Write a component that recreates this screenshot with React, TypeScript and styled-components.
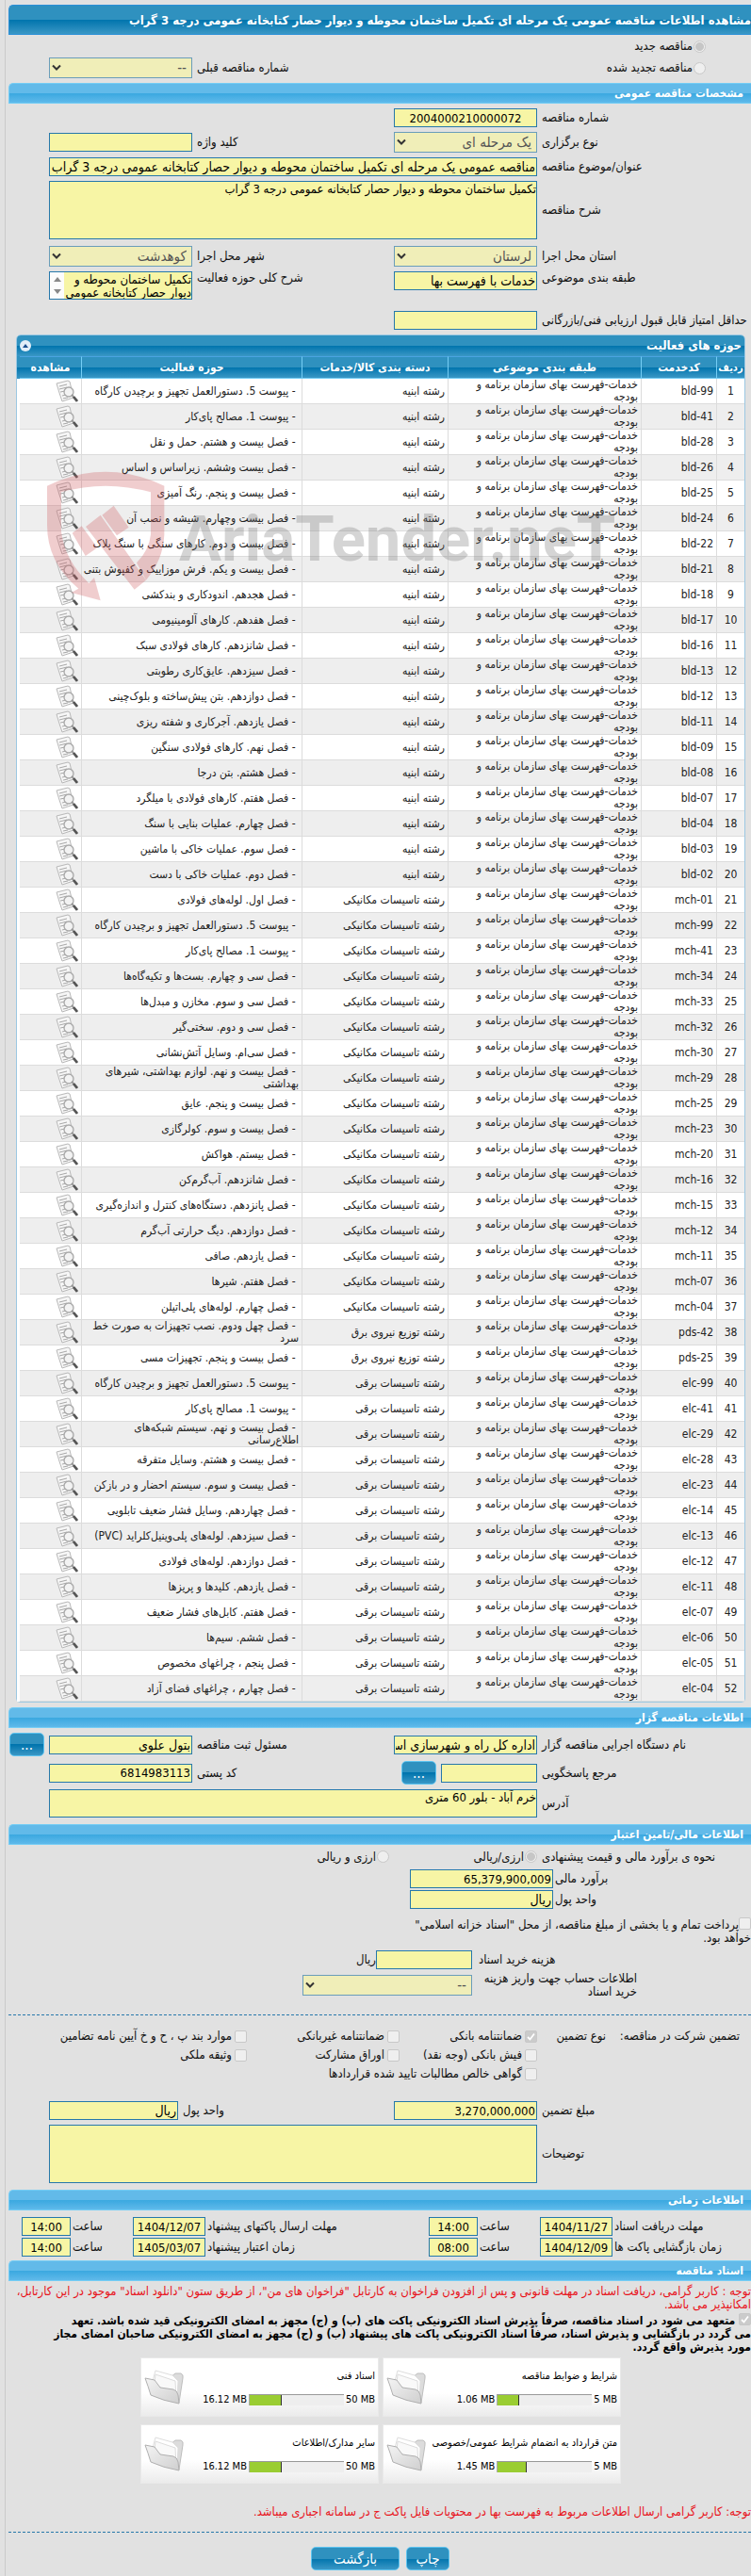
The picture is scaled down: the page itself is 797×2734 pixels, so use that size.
import React, { useId } from 'react';
import styled, { createGlobalStyle, css } from 'styled-components';

const fonts = `Tahoma, "DejaVu Sans Condensed", "DejaVu Sans", sans-serif`;

const GlobalStyle = createGlobalStyle`
  * { box-sizing: border-box; }
  body { margin: 0; background: #e1e1e1; }
  body, input, textarea, select, button { font-family: ${fonts}; }
`;

const Page = styled.main`
  direction: rtl;
  position: relative;
  margin-left: 5px;
  padding: 5px 0 6px 3px;
  border-left: 1px solid #cacaca;
  color: #111;
  font-size: 13px;
  line-height: 14px;
`;

const darkBar = 'linear-gradient(#2f91bf 0, #2f91bf 50%, #0074ad 50%, #3a97c5 100%)';
const lightBar = 'linear-gradient(#62bae9 0, #62bae9 50%, #3aa8e0 50%, #5fb9ea 100%)';

const PageTitle = styled.h1`
  margin: 0;
  height: 32px;
  line-height: 32px;
  border: 1px solid #2a8fd8;
  border-right: 0;
  border-radius: 5px 0 0 0;
  background: ${darkBar};
  color: #fff;
  font-size: 13px;
  font-weight: bold;
  white-space: nowrap;
  overflow: hidden;
`;

const SectionTitle = styled.h2<{ $top?: number }>`
  margin: ${p => p.$top ?? 7}px 0 0;
  padding-right: 8px;
  height: 22px;
  line-height: 20px;
  border: 1px solid #74cdf5;
  border-right: 0;
  border-radius: 5px 0 0 0;
  background: ${lightBar};
  color: #fff;
  font-size: 12px;
  font-weight: bold;
`;

const Row = styled.div<{ $top?: number; $h?: number; $align?: string; $left?: number; $last?: string }>`
  display: grid;
  grid-template-columns: 222px 152px 1fr ${p => p.$last ?? '152px'};
  column-gap: 5px;
  align-items: ${p => p.$align ?? 'center'};
  margin-top: ${p => p.$top ?? 5}px;
  padding-left: ${p => p.$left ?? 43}px;
  min-height: ${p => p.$h ?? 20}px;
`;

const Label = styled.label`
  text-align: left;
`;

const fieldLook = css`
  border: 1px solid #2678ab;
  border-radius: 0;
  background: #f7f5a5;
  color: #000;
  outline: 0;
`;

const Input = styled.input<{ $w?: number; $span?: number }>`
  ${fieldLook}
  width: ${p => (p.$w ? `${p.$w}px` : '100%')};
  height: 20px;
  padding: 0 1px;
  font-size: 14px;
  text-align: right;
  ${p => p.$span && css`grid-column: span ${p.$span};`}
`;

const NumberInput = styled(Input)<{ $center?: boolean }>`
  direction: ltr;
  font-size: 13px;
  text-align: ${p => (p.$center ? 'center' : 'right')};
`;

const TextArea = styled.textarea<{ $h: number; $inset?: number }>`
  ${fieldLook}
  display: block;
  width: 100%;
  height: ${p => p.$h}px;
  padding: 1px 0 0 ${p => p.$inset ?? 0}px;
  font-size: 13px;
  line-height: 14px;
  resize: none;
  overflow: hidden;
`;

const Wide = styled.div`
  grid-column: span 3;
`;

const SelectBox = styled.span<{ $w?: number }>`
  position: relative;
  display: block;
  width: ${p => p.$w ?? 152}px;
  height: 22px;
  svg { position: absolute; left: 3px; top: 7px; pointer-events: none; }
`;

const SelectInput = styled.select`
  ${fieldLook}
  appearance: none;
  width: 100%;
  height: 22px;
  padding: 0 5px;
  border-color: #6a9dba;
  background: #f0eeb8;
  color: #555;
  font-size: 15px;
  opacity: 1;
`;

function Select({ id, value, width }: { id: string; value: string; width?: number }) {
  return (
    <SelectBox $w={width}>
      <SelectInput id={id} disabled defaultValue={value}>
        <option>{value}</option>
      </SelectInput>
      <svg width="10" height="8" viewBox="0 0 10 8">
        <path d="M1 1.5 5 5.5 9 1.5" fill="none" stroke="#333" strokeWidth="2" />
      </svg>
    </SelectBox>
  );
}

const ScrollField = styled.div`
  position: relative;
`;

const ScrollStrip = styled.span`
  position: absolute;
  inset: 1px auto 1px 1px;
  width: 15px;
  background: #fcfcfc;
  display: flex;
  flex-direction: column;
  align-items: center;
  justify-content: space-between;
  padding: 5px 0;
`;

const tick = css`
  appearance: none;
  flex: none;
  margin: 0;
  width: 13px;
  height: 13px;
  border: 1px solid #c8c8c8;
  background: #efefef;
`;

const Radio = styled.input.attrs({ type: 'radio' })`
  ${tick}
  border-radius: 50%;
  &:checked { background: radial-gradient(#c6c6c6 0 4px, #efefef 5px); }
`;

const CheckBox = styled.input.attrs({ type: 'checkbox' })`
  ${tick}
  border-radius: 2px;
  vertical-align: -1px;
  &:checked {
    background: #cbcbcb url("data:image/svg+xml,%3Csvg xmlns='http://www.w3.org/2000/svg' viewBox='0 0 11 11'%3E%3Cpath d='M2 6l2.5 2.5L9 2.5' fill='none' stroke='%23fff' stroke-width='1.8'/%3E%3C/svg%3E") center / 11px no-repeat;
  }
`;

const Choice = styled.label<{ $col?: number; $gap?: number }>`
  display: flex;
  align-items: center;
  gap: ${p => p.$gap ?? 1}px;
  white-space: nowrap;
  ${p => p.$col && css`grid-column: ${p.$col};`}
`;

const TypeRow = styled.div<{ $h: number }>`
  display: flex;
  align-items: center;
  justify-content: space-between;
  height: ${p => p.$h}px;
  padding: 0 48px 0 43px;
`;

const Pair = styled.div<{ $gap?: number }>`
  display: flex;
  align-items: center;
  gap: ${p => p.$gap ?? 5}px;
`;

const Button = styled.button<{ $w: number }>`
  width: ${p => p.$w}px;
  height: 25px;
  padding: 0;
  border: 1px solid #5cc3f0;
  border-radius: 5px;
  background: ${darkBar};
  color: #fff;
  font-size: 15px;
  line-height: 20px;
`;

/* ---------- activities table ---------- */

const Grid = styled.section`
  position: relative;
  margin: 5px 6px 0 8px;
  border: 1px solid #9cc8e2;
  border-radius: 5px 5px 4px 4px;
  background: #fff;
`;

const GridTitle = styled.header`
  display: flex;
  align-items: center;
  justify-content: space-between;
  height: 22px;
  padding: 0 3px;
  border-radius: 4px 4px 0 0;
  background: ${darkBar};
  color: #fff;
  font-size: 13px;
  font-weight: bold;
`;

const Collapse = styled.button`
  display: grid;
  place-items: center;
  width: 12px;
  height: 12px;
  padding: 0;
  border: 0;
  border-radius: 50%;
  background: #e3eef8;
`;

const Table = styled.table`
  width: 100%;
  border-collapse: separate;
  border-spacing: 0;
  table-layout: fixed;
  font-size: 12px;
  line-height: 13px;

  th {
    height: 24px;
    padding: 0;
    border-top: 1px solid #4aa3e0;
    border-left: 1px solid #74cdf5;
    border-bottom: 1px solid #74cdf5;
    background: ${darkBar};
    color: #fff;
    font-size: 12px;
    white-space: nowrap;
  }
  th:first-child { font-size: 11px; }
  td {
    height: 27px;
    padding: 0 3px 0 1px;
    border-left: 1px solid #dcdcdc;
    border-bottom: 1px solid #dcdcdc;
    color: #222;
  }
  td:nth-child(3) { padding-left: 16px; }
  td:first-child { text-align: center; padding: 0; }
  tr:nth-child(even) td { background: #eee; }
  th:last-child, td:last-child { border-left: 0; }
  td svg { display: block; }
`;

const TableInset = styled.div`
  padding-left: 3px;
  background: linear-gradient(#2f91bf, #2f91bf 12px, #0074ad 12px, #3a97c5 24px, #fff 24px);
`;

const Column = styled.col<{ $w?: number }>`
  width: ${p => (p.$w ? `${p.$w}px` : 'auto')};
`;

const bld = 'رشته ابنیه';
const mch = 'رشته تاسیسات مکانیکی';
const pds = 'رشته توزیع نیروی برق';
const elc = 'رشته تاسیسات برقی';

const activities: [string, string, string][] = [
  ['bld-99', bld, 'پیوست 5. دستورالعمل تجهیز و برچیدن کارگاه'],
  ['bld-41', bld, 'پیوست 1. مصالح پای‌کار'],
  ['bld-28', bld, 'فصل بیست و هشتم. حمل و نقل'],
  ['bld-26', bld, 'فصل بیست وششم. زیراساس و اساس'],
  ['bld-25', bld, 'فصل بیست و پنجم. رنگ آمیزی'],
  ['bld-24', bld, 'فصل بیست وچهارم. شیشه و نصب آن'],
  ['bld-22', bld, 'فصل بیست و دوم. کارهای سنگی با سنگ پلاک'],
  ['bld-21', bld, 'فصل بیست و یکم. فرش موزاییک و کفپوش بتنی'],
  ['bld-18', bld, 'فصل هجدهم. اندودکاری و بندکشی'],
  ['bld-17', bld, 'فصل هفدهم. کارهای آلومینیومی'],
  ['bld-16', bld, 'فصل شانزدهم. کارهای فولادی سبک'],
  ['bld-13', bld, 'فصل سیزدهم. عایق‌کاری رطوبتی'],
  ['bld-12', bld, 'فصل دوازدهم. بتن پیش‌ساخته و بلوک‌چینی'],
  ['bld-11', bld, 'فصل یازدهم. آجرکاری و شفته ریزی'],
  ['bld-09', bld, 'فصل نهم. کارهای فولادی سنگین'],
  ['bld-08', bld, 'فصل هشتم. بتن درجا'],
  ['bld-07', bld, 'فصل هفتم. کارهای فولادی با میلگرد'],
  ['bld-04', bld, 'فصل چهارم. عملیات بنایی با سنگ'],
  ['bld-03', bld, 'فصل سوم. عملیات خاکی با ماشین'],
  ['bld-02', bld, 'فصل دوم. عملیات خاکی با دست'],
  ['mch-01', mch, 'فصل اول. لوله‌های فولادی'],
  ['mch-99', mch, 'پیوست 5. دستورالعمل تجهیز و برچیدن کارگاه'],
  ['mch-41', mch, 'پیوست 1. مصالح پای‌کار'],
  ['mch-34', mch, 'فصل سی و چهارم. بست‌ها و تکیه‌گاه‌ها'],
  ['mch-33', mch, 'فصل سی و سوم. مخازن و مبدل‌ها'],
  ['mch-32', mch, 'فصل سی و دوم. سختی‌گیر'],
  ['mch-30', mch, 'فصل سی‌ام. وسایل آتش‌نشانی'],
  ['mch-29', mch, 'فصل بیست و نهم. لوازم بهداشتی، شیرهای بهداشتی'],
  ['mch-25', mch, 'فصل بیست و پنجم. عایق'],
  ['mch-23', mch, 'فصل بیست و سوم. کولرگازی'],
  ['mch-20', mch, 'فصل بیستم. هواکش'],
  ['mch-16', mch, 'فصل شانزدهم. آب‌گرم‌کن'],
  ['mch-15', mch, 'فصل پانزدهم. دستگاه‌های کنترل و اندازه‌گیری'],
  ['mch-12', mch, 'فصل دوازدهم. دیگ حرارتی آب‌گرم'],
  ['mch-11', mch, 'فصل یازدهم. صافی'],
  ['mch-07', mch, 'فصل هفتم. شیرها'],
  ['mch-04', mch, 'فصل چهارم. لوله‌های پلی‌اتیلن'],
  ['pds-42', pds, 'فصل چهل ودوم. نصب تجهیزات به صورت خط سرد'],
  ['pds-25', pds, 'فصل بیست و پنجم. تجهیزات مسی'],
  ['elc-99', elc, 'پیوست 5. دستورالعمل تجهیز و برچیدن کارگاه'],
  ['elc-41', elc, 'پیوست 1. مصالح پای‌کار'],
  ['elc-29', elc, 'فصل بیست و نهم. سیستم شبکه‌های اطلاع‌رسانی'],
  ['elc-28', elc, 'فصل بیست و هشتم. وسایل متفرقه'],
  ['elc-23', elc, 'فصل بیست و سوم. سیستم احضار و در بازکن'],
  ['elc-14', elc, 'فصل چهاردهم. وسایل فشار ضعیف تابلویی'],
  ['elc-13', elc, 'فصل سیزدهم. لوله‌های پلی‌وینیل‌کلراید (PVC)'],
  ['elc-12', elc, 'فصل دوازدهم. لوله‌های فولادی'],
  ['elc-11', elc, 'فصل یازدهم. کلیدها و پریزها'],
  ['elc-07', elc, 'فصل هفتم. کابل‌های فشار ضعیف'],
  ['elc-06', elc, 'فصل ششم. سیم‌ها'],
  ['elc-05', elc, 'فصل پنجم ، چراغهای مخصوص'],
  ['elc-04', elc, 'فصل چهارم ، چراغهای فضای آزاد'],
];

function ViewIcon() {
  return (
    <svg width="24" height="24" viewBox="0 0 24 24">
      <path d="M1 4 13 1l2 1 4 17-12 4L4 14Z" fill="#f6f6f6" stroke="#b8b8b8" />
      <path d="m4 7 8-2M4 10l8-2M5 13l5-1M7 17l4-1M8 20l5-1" stroke="#a8a8a8" />
      <circle cx="14" cy="13" r="5" fill="#f2f2f2" fillOpacity=".85" stroke="#a8a8a8" strokeWidth="1.3" />
      <path d="m17 16 2 2" stroke="#999" strokeWidth="1.8" />
      <path d="m19 18 4 5" stroke="#555" strokeWidth="2.8" />
    </svg>
  );
}

const WatermarkBox = styled.div`
  position: absolute;
  left: 32px;
  top: 143px;
  display: flex;
  align-items: flex-start;
  gap: 15px;
  pointer-events: none;
  direction: ltr;
  opacity: 0.3;
`;

const WatermarkText = styled.span`
  padding-top: 33px;
  color: #777;
  font: bold 67px/80px Roboto, "Liberation Sans", sans-serif;
`;

function Watermark() {
  return (
    <WatermarkBox aria-hidden="true">
      <svg width="125" height="140" viewBox="30 25 375 420" fill="#cf5b60">
        <path d="M30 75Q215-15 403 75V230Q400 310 345 375L315 320Q355 280 360 230V95Q215 55 75 95V220Q85 310 163 385L180 367 200 440 107 415 130 402Q30 320 30 200Z" />
        <path d="m153 205 47-37 145 207-37 30ZM110 225l30-22 50 69-38 26ZM205 168l37-30 48 69-38 26Z" />
      </svg>
      <WatermarkText>AriaTender.neT</WatermarkText>
    </WatermarkBox>
  );
}

function ActivityTable() {
  return (
    <Grid>
      <GridTitle>
        <span>حوزه های فعالیت</span>
        <Collapse aria-label="بستن">
          <svg width="6" height="4" viewBox="0 0 6 4"><path d="M0 4 3 0l3 4Z" fill="#1b4f8f" /></svg>
        </Collapse>
      </GridTitle>
      <TableInset>
        <Table>
          <colgroup>
            <Column $w={30} />
            <Column $w={80} />
            <Column $w={205} />
            <Column $w={155} />
            <Column />
            <Column $w={65} />
          </colgroup>
          <thead>
            <tr>
              <th>ردیف</th>
              <th>کدخدمت</th>
              <th>طبقه بندی موضوعی</th>
              <th>دسته بندی کالا/خدمات</th>
              <th>حوزه فعالیت</th>
              <th>مشاهده</th>
            </tr>
          </thead>
          <tbody>
            {activities.map(([code, field, title], i) => (
              <tr key={code}>
                <td>{i + 1}</td>
                <td>{code}</td>
                <td>خدمات-فهرست بهای سازمان برنامه و بودجه</td>
                <td>{field}</td>
                <td>&nbsp;- {title}</td>
                <td><ViewIcon /></td>
              </tr>
            ))}
          </tbody>
        </Table>
      </TableInset>
      <Watermark />
    </Grid>
  );
}

/* ---------- finance ---------- */

const MoneyRow = styled.div<{ $top: number; $label: number; $gap?: number; $h?: number }>`
  display: grid;
  grid-template-columns: ${p => p.$label}px auto 1fr;
  column-gap: ${p => p.$gap ?? 2}px;
  align-items: center;
  min-height: ${p => p.$h ?? 20}px;
  margin-top: ${p => p.$top}px;
`;

const WrappedLabel = styled.label`
  justify-self: end;
  width: 168px;
`;

const TreasuryNote = styled.label`
  display: block;
  width: 370px;
  margin-top: 9px;
`;

const Divider = styled.hr<{ $top: number }>`
  margin: ${p => p.$top}px 0 0;
  border: 0;
  border-top: 1px dashed #2678ab;
`;

const Guarantee = styled.div`
  display: grid;
  grid-template-columns: 142px 73px 146px 162px 1fr;
  grid-auto-rows: 20px;
  align-items: center;
  margin-top: 12px;
  padding-right: 12px;
  white-space: nowrap;
`;

/* ---------- times ---------- */

const TimeRow = styled.div<{ $top: number }>`
  display: grid;
  grid-template-columns: 145px 77px 62px 52px 1fr 77px 62px 52px;
  column-gap: 2px;
  align-items: center;
  margin-top: ${p => p.$top}px;
  padding-left: 14px;
`;

function TimePart({ label, date, time }: { label: string; date: string; time: string }) {
  const id = useId();
  return (
    <>
      <Label htmlFor={id}>{label}</Label>
      <NumberInput id={id} readOnly $center defaultValue={date} />
      <Label htmlFor={`${id}h`}>ساعت</Label>
      <NumberInput id={`${id}h`} readOnly $center defaultValue={time} />
    </>
  );
}

/* ---------- documents ---------- */

const Notice = styled.p<{ $top: number }>`
  margin: ${p => p.$top}px 0 0;
  color: #e8141c;
`;

const Pledge = styled.label`
  display: block;
  margin-top: 2px;
  color: #000;
  font-size: 12px;
  font-weight: bold;
`;

const Cards = styled.div`
  display: grid;
  grid-template-columns: 253px 253px;
  gap: 8px 4px;
  padding-right: 138px;
  margin-top: 4px;
`;

const Card = styled.article`
  display: grid;
  grid-template-columns: 1fr 42px;
  align-items: center;
  height: 63px;
  padding: 0 3px;
  border: 1px solid #e9e9e9;
  background: linear-gradient(#fff 60%, #ebebeb);
  color: #000;
`;

const CardTitle = styled.h3`
  margin: 0 0 12px;
  font-size: 11px;
  font-weight: normal;
  line-height: 14px;
`;

const Meter = styled.div`
  display: flex;
  align-items: center;
  gap: 2px;
  white-space: nowrap;
  font-size: 11px;
  line-height: 12px;
`;

const Track = styled.span`
  display: block;
  direction: ltr;
  width: 101px;
  height: 12px;
  border-top: 1px solid #999;
  border-left: 1px solid #aaa;
  background: #eee;
`;

const Fill = styled.span`
  display: block;
  height: 11px;
  border-right: 1px solid #333;
  background: #9acd32;
`;

function FolderIcon() {
  return (
    <svg width="42" height="38" viewBox="0 0 42 38">
      <defs>
        <linearGradient id="folder" x2="1" y2="1">
          <stop stopColor="#f4f4f4" />
          <stop offset="1" stopColor="#cfcfcf" />
        </linearGradient>
      </defs>
      <path d="m28 8 5-4h6q3 1 2 5l-4 26-10-15Z" fill="#dcdcdc" stroke="#bdbdbd" />
      <path d="M9 12 12 1l18 5 6 6-1 20Z" fill="#fff" stroke="#ddd" />
      <path d="m11 14 1-9 21 7 1 18" fill="#f9f9f9" stroke="#ddd" />
      <path d="M1 9l10 2 6 8 14 2q4 1 5 6l1 9Q20 33 7 27 4 17 1 9Z" fill="url(#folder)" stroke="#b0b0b0" />
    </svg>
  );
}

function DocumentCard({ title, limit, used, share }: { title: string; limit: string; used: string; share: number }) {
  return (
    <Card>
      <div>
        <CardTitle>{title}</CardTitle>
        <Meter>
          <span dir="ltr">{limit}</span>
          <Track><Fill style={{ width: `${share}%` }} /></Track>
          <span dir="ltr">{used}</span>
        </Meter>
      </div>
      <FolderIcon />
    </Card>
  );
}

const Actions = styled.footer`
  display: flex;
  gap: 7px;
  margin-top: 15px;
  padding-right: 320px;
`;

export default function App() {
  return (
    <>
      <GlobalStyle />
      <Page>
        <PageTitle>مشاهده اطلاعات مناقصه عمومی یک مرحله ای تکمیل ساختمان محوطه و دیوار حصار کتابخانه عمومی درجه 3 گراب</PageTitle>
        <TypeRow $h={24}>
          <Choice><Radio name="kind" defaultChecked disabled />مناقصه جدید</Choice>
        </TypeRow>
        <TypeRow $h={22}>
          <Choice><Radio name="kind" disabled />مناقصه تجدید شده</Choice>
          <Pair>
            <Label htmlFor="previous">شماره مناقصه قبلی</Label>
            <Select id="previous" value="--" />
          </Pair>
        </TypeRow>

        <SectionTitle $top={5}>مشخصات مناقصه عمومی</SectionTitle>
        <Row>
          <Label htmlFor="number">شماره مناقصه</Label>
          <NumberInput id="number" readOnly $center defaultValue="2004000210000072" />
        </Row>
        <Row $h={22}>
          <Label htmlFor="method">نوع برگزاری</Label>
          <Select id="method" value="یک مرحله ای" />
          <Label htmlFor="keyword">کلید واژه</Label>
          <Input id="keyword" readOnly />
        </Row>
        <Row>
          <Label htmlFor="subject">عنوان/موضوع مناقصه</Label>
          <Input id="subject" readOnly $span={3} defaultValue="مناقصه عمومی یک مرحله ای تکمیل ساختمان محوطه و دیوار حصار کتابخانه عمومی درجه 3 گراب" />
        </Row>
        <Row>
          <Label htmlFor="description">شرح مناقصه</Label>
          <Wide><TextArea id="description" readOnly $h={62} defaultValue="تکمیل ساختمان محوطه و دیوار حصار کتابخانه عمومی درجه 3 گراب" /></Wide>
        </Row>
        <Row $top={7} $h={22}>
          <Label htmlFor="province">استان محل اجرا</Label>
          <Select id="province" value="لرستان" />
          <Label htmlFor="city">شهر محل اجرا</Label>
          <Select id="city" value="کوهدشت" />
        </Row>
        <Row $align="start">
          <Label htmlFor="category">طبقه بندی موضوعی</Label>
          <Input id="category" readOnly defaultValue="خدمات با فهرست بها" />
          <Label htmlFor="scope">شرح کلی حوزه فعالیت</Label>
          <ScrollField>
            <TextArea id="scope" readOnly $h={30} $inset={16} defaultValue="تکمیل ساختمان محوطه و دیوار حصار کتابخانه عمومی درجه 3 گراب" />
            <ScrollStrip>
              <svg width="8" height="5" viewBox="0 0 8 5"><path d="M0 5 4 0l4 5Z" fill="#888" /></svg>
              <svg width="8" height="5" viewBox="0 0 8 5"><path d="m0 0 4 5 4-5Z" fill="#888" /></svg>
            </ScrollStrip>
          </ScrollField>
        </Row>
        <Row $top={12}>
          <Label htmlFor="score">حداقل امتیاز قابل قبول ارزیابی فنی/بازرگانی</Label>
          <Input id="score" readOnly />
        </Row>

        <ActivityTable />

        <SectionTitle $top={5}>اطلاعات مناقصه گزار</SectionTitle>
        <Row $h={25} $left={0} $last="152px 38px">
          <Label htmlFor="agency">نام دستگاه اجرایی مناقصه گزار</Label>
          <Input id="agency" readOnly defaultValue="اداره کل راه و شهرسازی استان لرستان" />
          <Label htmlFor="registrar">مسئول ثبت مناقصه</Label>
          <Input id="registrar" readOnly defaultValue="بتول علوی" />
          <Button $w={37}>...</Button>
        </Row>
        <Row $h={25}>
          <Label htmlFor="contact">مرجع پاسخگویی</Label>
          <Pair>
            <Input id="contact" readOnly $w={102} />
            <Button $w={37}>...</Button>
          </Pair>
          <Label htmlFor="postal">کد پستی</Label>
          <NumberInput id="postal" readOnly defaultValue="6814983113" />
        </Row>
        <Row>
          <Label htmlFor="address">آدرس</Label>
          <Wide><TextArea id="address" readOnly $h={30} defaultValue="خرم آباد - بلور 60 متری" /></Wide>
        </Row>

        <SectionTitle>اطلاعات مالی/تامین اعتبار</SectionTitle>
        <Row $top={0} $h={25}>
          <Label as="span">نحوه ی برآورد مالی و قیمت پیشنهادی</Label>
          <Choice><Radio name="currency" defaultChecked disabled />ارزی/ریالی</Choice>
          <Choice><Radio name="currency" disabled />ارزی و ریالی</Choice>
        </Row>
        <MoneyRow $top={1} $label={208}>
          <Label htmlFor="estimate">برآورد مالی</Label>
          <NumberInput id="estimate" readOnly $w={152} defaultValue="65,379,900,009" />
        </MoneyRow>
        <MoneyRow $top={2} $label={208}>
          <Label htmlFor="unit">واحد پول</Label>
          <Input id="unit" readOnly $w={152} defaultValue="ریال" />
        </MoneyRow>
        <TreasuryNote>
          <CheckBox disabled />پرداخت تمام و یا بخشی از مبلغ مناقصه، از محل "اسناد خزانه اسلامی" خواهد بود.
        </TreasuryNote>
        <MoneyRow $top={6} $label={289} $gap={7}>
          <Label htmlFor="fee">هزینه خرید اسناد</Label>
          <Pair $gap={0}>
            <Input id="fee" readOnly $w={102} />
            <span>ریال</span>
          </Pair>
        </MoneyRow>
        <MoneyRow $top={3} $label={289} $gap={7} $h={28}>
          <WrappedLabel htmlFor="account">اطلاعات حساب جهت واریز هزینه خرید اسناد</WrappedLabel>
          <Select id="account" value="--" width={180} />
        </MoneyRow>

        <Divider $top={17} />
        <Guarantee>
          <span>تضمین شرکت در مناقصه:</span>
          <span>نوع تضمین</span>
          <Choice $gap={3} $col={3}><CheckBox defaultChecked disabled />ضمانتنامه بانکی</Choice>
          <Choice $gap={3} $col={4}><CheckBox disabled />ضمانتنامه غیربانکی</Choice>
          <Choice $gap={3} $col={5}><CheckBox disabled />موارد بند پ ، ح و خ آیین نامه تضامین</Choice>
          <Choice $gap={3} $col={3}><CheckBox disabled />فیش بانکی (وجه نقد)</Choice>
          <Choice $gap={3} $col={4}><CheckBox disabled />اوراق مشارکت</Choice>
          <Choice $gap={3} $col={5}><CheckBox disabled />وثیقه ملکی</Choice>
          <Choice $gap={3} $col={3}><CheckBox disabled />گواهی خالص مطالبات تایید شده قراردادها</Choice>
        </Guarantee>
        <Row $top={19} $last="137px">
          <Label htmlFor="amount">مبلغ تضمین</Label>
          <NumberInput id="amount" readOnly defaultValue="3,270,000,000" />
          <Label htmlFor="amountUnit">واحد پول</Label>
          <Input id="amountUnit" readOnly defaultValue="ریال" />
        </Row>
        <Row>
          <Label htmlFor="notes">توضیحات</Label>
          <Wide><TextArea id="notes" readOnly $h={62} /></Wide>
        </Row>

        <SectionTitle>اطلاعات زمانی</SectionTitle>
        <TimeRow $top={7}>
          <TimePart label="مهلت دریافت اسناد" date="1404/11/27" time="14:00" />
          <TimePart label="مهلت ارسال پاکتهای پیشنهاد" date="1404/12/07" time="14:00" />
        </TimeRow>
        <TimeRow $top={2}>
          <TimePart label="زمان بازگشایی پاکت ها" date="1404/12/09" time="08:00" />
          <TimePart label="زمان اعتبار پیشنهاد" date="1405/03/07" time="14:00" />
        </TimeRow>

        <SectionTitle $top={4}>اسناد مناقصه</SectionTitle>
        <Notice $top={4}>
          توجه : کاربر گرامی، دریافت اسناد در مهلت قانونی و پس از افزودن فراخوان به کارتابل "فراخوان های من"، از طریق ستون "دانلود اسناد" موجود در این کارتابل، امکانپذیر می باشد.
        </Notice>
        <Pledge>
          <CheckBox defaultChecked disabled /> متعهد می شود در اسناد مناقصه، صرفاً پذیرش اسناد الکترونیکی پاکت های (ب) و (ج) مجهز به امضای الکترونیکی قید شده باشد. تعهد
          <br />
          می گردد در بازگشایی و پذیرش اسناد، صرفاً اسناد الکترونیکی پاکت های پیشنهاد (ب) و (ج) مجهز به امضای الکترونیکی صاحبان امضای مجاز
          <br />
          مورد پذیرش واقع گردد.
        </Pledge>
        <Cards>
          <DocumentCard title="شرایط و ضوابط مناقصه" limit="5 MB" used="1.06 MB" share={23} />
          <DocumentCard title="اسناد فنی" limit="50 MB" used="16.12 MB" share={34} />
          <DocumentCard title="متن قرارداد به انضمام شرایط عمومی/خصوصی" limit="5 MB" used="1.45 MB" share={31} />
          <DocumentCard title="سایر مدارک/اطلاعات" limit="50 MB" used="16.12 MB" share={34} />
        </Cards>
        <Notice $top={23}>توجه: کاربر گرامی ارسال اطلاعات مربوط به فهرست بها در محتویات فایل پاکت ج در سامانه اجباری میباشد.</Notice>
        <Divider $top={14} />
        <Actions>
          <Button $w={46}>چاپ</Button>
          <Button $w={94}>بازگشت</Button>
        </Actions>
      </Page>
    </>
  );
}
